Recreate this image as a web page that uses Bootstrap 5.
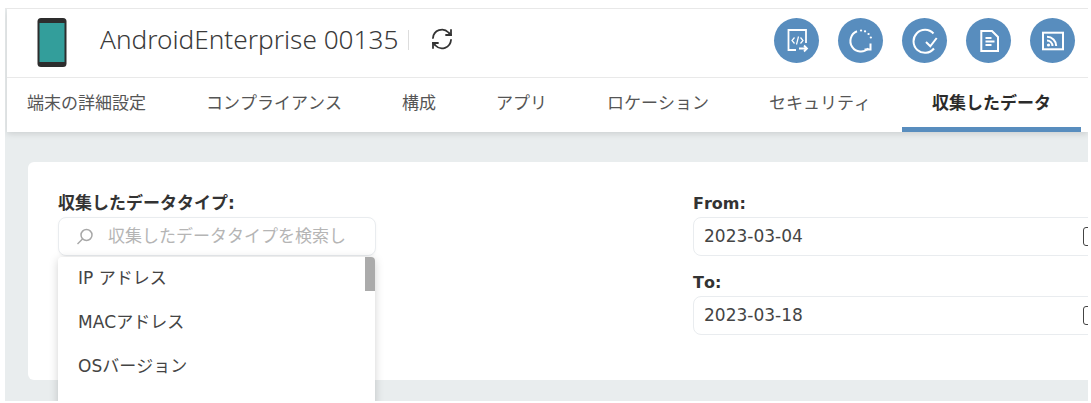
<!DOCTYPE html>
<html lang="ja">
<head>
    <meta charset="UTF-8">
    <meta name="viewport" content="width=device-width, initial-scale=1.0">
    <title>AndroidEnterprise 00135</title>
    <link rel="stylesheet" href="https://cdn.jsdelivr.net/npm/bootstrap@5.3.0/dist/css/bootstrap.min.css">
    <script src="https://cdn.jsdelivr.net/npm/bootstrap@5.3.0/dist/js/bootstrap.bundle.min.js"></script>
    <style>
        html, body { height: 403px; overflow: hidden; }
        body { background: #fff; font-family: "DejaVu Sans", "Noto Sans CJK JP", sans-serif; color: #333; font-size: 17px; font-kerning: none; }
        .frame { margin: 8px 3px 0 5px; height: 393px; background: #e9edee; border-top: 1px solid #e8e8e8; overflow: hidden; }
        .head-box { background: #fff; margin-left: 2px; box-shadow: 0 2px 6px rgba(0,0,0,.12); }
        .head-top { height: 69px; border-bottom: 1px solid #e9e9e9; padding: 0 0 0 30px; }
        .phone { width: 30px; height: 50px; }
        .dev-title { font-family: "Noto Sans", sans-serif; font-kerning: normal; font-weight: 300; font-size: 26.2px; color: #3a3a3a; margin: 0 0 8px 33px; line-height: 1; padding-right: 10px; }
        .title-sep { width: 1px; height: 20px; background: #ddd; margin-bottom: 6px; }
        .reload { margin: 0 0 8px 21px; width: 24px; height: 24px; }
        .round-btn { width: 45px; height: 45px; background: #588dbe; border: 0; padding: 0; }
        .round-btn svg { width: 26px; height: 26px; }
        .btn-row { gap: 19px; margin: 0 13px 5px 0; }
        .tab-row { height: 54px; padding-left: 20px; }
        .tab-group { gap: 60px; }
        .tab-item { font-size: 17px; color: #555; height: 54px; line-height: 51px; white-space: nowrap; text-decoration: none; }
        .tab-item.on { color: #2b2b2b; font-weight: 700; border-bottom: 5px solid #588dbe; width: 179px; text-align: center; margin-right: 7px; }
        .data-card { background: #fff; margin: 30px 0 0 23px; width: 1120px; height: 218px; border-radius: 6px; padding: 29px 0 0 30px; }
        .left-col { width: 635px; position: relative; }
        .right-col { width: 420px; }
        .f-label { font-weight: 700; font-size: 16px; color: #333; line-height: 26px; height: 26px; margin: 0; display: block; }
        .cjk-label { font-size: 17px; line-height: 24px; }
        .f-input { height: 39px; border: 1px solid #e9ecef; border-radius: 8px; background: #fff; font-size: 17px; color: #444; padding: 0 10px; line-height: 37px; }
        .search-box { width: 318px; color: #b5b5b5; padding-left: 16px; gap: 13px; box-shadow: 0 1px 3px rgba(0,0,0,.04); white-space: nowrap; overflow: hidden; }
        .pick-menu { position: absolute; left: 0; top: 66px; width: 317px; height: 160px; background: #fff; border-radius: 4px 4px 0 0; box-shadow: 0 2px 10px rgba(0,0,0,.18); overflow: hidden; z-index: 5; }
        .pick-item { height: 44px; line-height: 42px; padding-left: 20px; font-size: 17px; color: #444; }
        .pick-thumb { position: absolute; top: 0; right: 0; width: 10px; height: 34px; background: #ababab; }
        .date-row { margin-bottom: 14px; }
        .cal-glyph { position: absolute; right: 14px; top: 10px; width: 16px; height: 19px; border: 1.5px solid #444; border-radius: 3px; }
        .date-wrap { position: relative; width: 420px; }
    </style>
</head>
<body>
    <div class="frame">
        <div class="head-box">
            <div class="head-top d-flex align-items-center">
                <svg class="phone" viewBox="0 0 30 50">
                    <rect x="0.5" y="0" width="29" height="49" rx="3.5" fill="#2d2d2d"/>
                    <rect x="2.5" y="5" width="25" height="39" fill="#339e9b"/>
                </svg>
                <span class="dev-title">AndroidEnterprise 00135</span>
                <span class="title-sep"></span>
                <svg class="reload" viewBox="0 0 24 24" fill="none" stroke="#333" stroke-width="1.8" stroke-linecap="round">
                    <path d="M3 11a9 9 0 0 1 15.500-5.500L21 8"/>
                    <path d="M21 3v5h-5"/>
                    <path d="M21 13a9 9 0 0 1-15.500 5.500L3 16"/>
                    <path d="M3 21v-5h5"/>
                </svg>
                <div class="btn-row d-flex ms-auto">
                    <button class="round-btn rounded-circle d-flex align-items-center justify-content-center" type="button">
                        <svg viewBox="0 0 26 26" fill="none" stroke="#fff" stroke-width="1.800">
                            <path d="M22 15V2H4.500v20H12"/>
                            <path d="M10.500 9.500l-2.500 3 2.500 3M16.500 9.500l2.500 3-2.500 3M14.500 8.500l-2 8" stroke-width="1.200"/>
                            <path d="M15 20.500h8M20 17.500l3 3-3 3"/>
                        </svg>
                    </button>
                    <button class="round-btn rounded-circle d-flex align-items-center justify-content-center" type="button">
                        <svg viewBox="0 0 26 26" fill="none" stroke="#fff" stroke-width="2">
                            <path d="M9 3.300A10.500 10.500 0 1 0 20.400 20.400"/>
                            <path d="M13 2.500h.1M17 3.300h.1M20.500 6h.1M22.800 9.500h.1" stroke-linecap="round" stroke-width="2.200"/>
                            <path d="M22.500 15.500v6h-6"/>
                        </svg>
                    </button>
                    <button class="round-btn rounded-circle d-flex align-items-center justify-content-center" type="button">
                        <svg viewBox="0 0 26 26" fill="none" stroke="#fff" stroke-width="2">
                            <path d="M21.500 5.500A11.500 11.500 0 1 0 22 20.500"/>
                            <path d="M14 14l4.300 4.300 6.400-8.300"/>
                        </svg>
                    </button>
                    <button class="round-btn rounded-circle d-flex align-items-center justify-content-center" type="button">
                        <svg viewBox="0 0 26 26" fill="none" stroke="#fff" stroke-width="2">
                            <path d="M5.300 3h10.700l6 6v14H5.300z"/>
                            <path d="M9.500 10h6M9.500 13.500h9M9.500 17h6"/>
                        </svg>
                    </button>
                    <button class="round-btn rounded-circle d-flex align-items-center justify-content-center" type="button">
                        <svg viewBox="0 0 26 26" fill="none" stroke="#fff" stroke-width="2">
                            <rect x="3" y="4.700" width="20" height="16.600"/>
                            <circle cx="8.500" cy="17" r="1.600" fill="#fff" stroke="none"/>
                            <path d="M7 12.500a5.500 5.500 0 0 1 5.500 5.500M7 8.800a9.200 9.200 0 0 1 9.200 9.200"/>
                        </svg>
                    </button>
                </div>
            </div>
            <div class="tab-row d-flex">
                <div class="tab-group d-flex">
                    <a class="tab-item" href="#">端末の詳細設定</a>
                    <a class="tab-item" href="#">コンプライアンス</a>
                    <a class="tab-item" href="#">構成</a>
                    <a class="tab-item" href="#">アプリ</a>
                    <a class="tab-item" href="#">ロケーション</a>
                    <a class="tab-item" href="#">セキュリティ</a>
                </div>
                <a class="tab-item on ms-auto" href="#">収集したデータ</a>
            </div>
        </div>
        <div class="data-card d-flex">
            <div class="left-col">
                <label class="f-label cjk-label">収集したデータタイプ:</label>
                <div class="f-input search-box d-flex align-items-center">
                    <svg width="20" height="20" viewBox="0 0 20 20" fill="none" stroke="#a8a8a8" stroke-width="1.500">
                        <circle cx="11.500" cy="8" r="5.500"/>
                        <path d="M7.500 12l-5 5"/>
                    </svg>
                    <span>収集したデータタイプを検索し</span>
                </div>
                <div class="pick-menu">
                    <div class="pick-item">IP アドレス</div>
                    <div class="pick-item">MACアドレス</div>
                    <div class="pick-item">OSバージョン</div>
                    <div class="pick-thumb"></div>
                </div>
            </div>
            <div class="right-col">
                <label class="f-label">From:</label>
                <div class="date-wrap date-row">
                    <div class="f-input">2023-03-04</div>
                    <span class="cal-glyph"></span>
                </div>
                <label class="f-label">To:</label>
                <div class="date-wrap">
                    <div class="f-input">2023-03-18</div>
                    <span class="cal-glyph"></span>
                </div>
            </div>
        </div>
    </div>
</body>
</html>
